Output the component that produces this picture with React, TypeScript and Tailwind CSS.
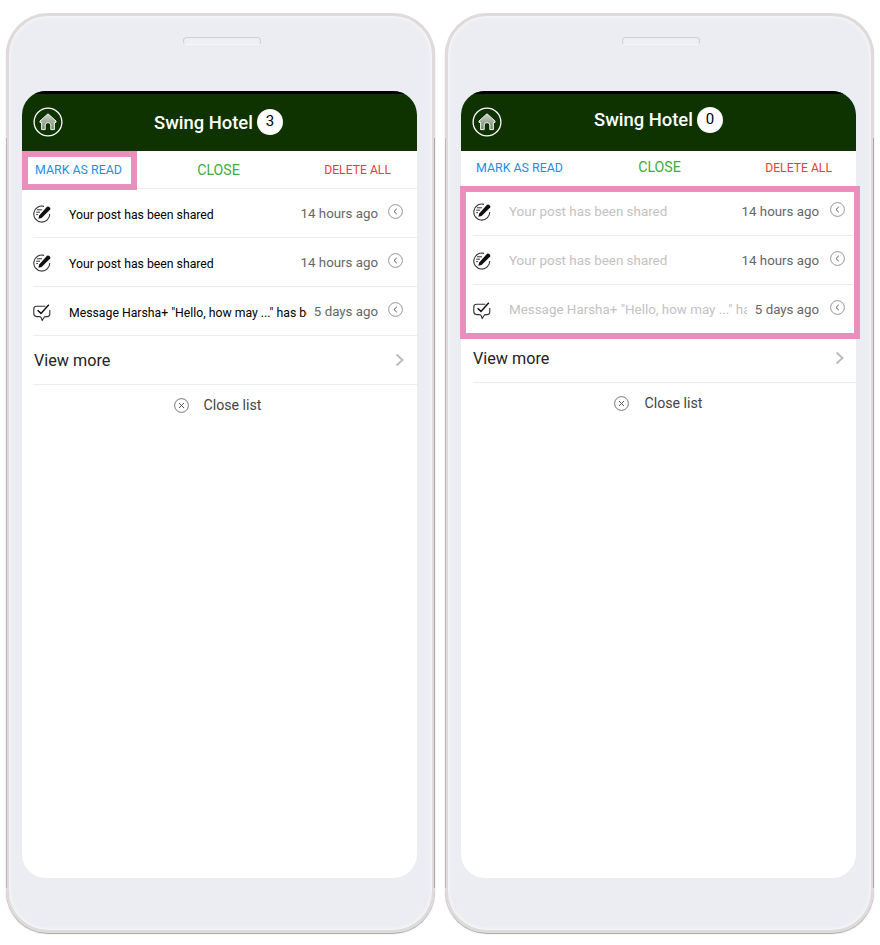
import React from 'react';

function HomeIcon() {
  return (
    <svg width="30" height="30" viewBox="0 0 30 30" fill="none">
      <defs>
        <linearGradient id="homeFill" x1="0" y1="0" x2="0" y2="1">
          <stop offset="0" stopColor="#c9d3c5" />
          <stop offset="1" stopColor="#75876f" />
        </linearGradient>
      </defs>
      <circle cx="15" cy="15" r="13.9" stroke="#fff" strokeWidth="1.3" />
      <path
        d="M15 6.8 L23 14 V15.4 H21.4 V22.6 H17.8 V18 Q17.8 15.6 15 15.6 Q12.2 15.6 12.2 18 V22.6 H8.6 V15.4 H7 V14 Z"
        fill="url(#homeFill)"
        stroke="#f4f6f2"
        strokeWidth="1"
        strokeLinejoin="round"
      />
    </svg>
  );
}

function PenIcon() {
  return (
    <svg width="18" height="18" viewBox="0 0 18 18" fill="none">
      <path d="M11 1.4 A8 8 0 1 0 16.8 9" stroke="#333" strokeWidth="1.1" />
      <path d="M6.2 10.6 L5.4 13.8 L8.6 13 L17.2 4.6 Q17.8 3.6 16.6 2.2 Q15.2 1 14 1.8 Z" fill="#111" />
      <path d="M4 4.8 H9 M3.2 7.2 H7 M3.2 9.6 H5" stroke="#333" strokeWidth="1" />
    </svg>
  );
}

function CheckBubbleIcon() {
  return (
    <svg width="18" height="18" viewBox="0 0 18 18" fill="none">
      <path
        d="M12.4 2.2 H3.6 Q0.8 2.2 0.8 5 V9.6 Q0.8 12.6 3.6 12.6 H6.4 Q7.8 12.6 8.4 14 L9.2 16.6 L11 13.4 Q11.4 12.6 12.6 12.6 H14.2 Q16.8 12.6 16.8 9.8 V6"
        stroke="#333"
        strokeWidth="1.1"
        strokeLinejoin="round"
      />
      <path d="M4.6 6.2 L8 9.4 L15.8 0.8" stroke="#111" strokeWidth="1.5" />
    </svg>
  );
}

function BackCircle() {
  return (
    <svg width="15" height="15" viewBox="0 0 15 15" fill="none">
      <circle cx="7.5" cy="7.5" r="6.9" stroke="#8a8a8a" strokeWidth="0.9" />
      <path d="M8.8 4.8 L6 7.5 L8.8 10.2" stroke="#555" strokeWidth="1" />
    </svg>
  );
}

function CloseCircle() {
  return (
    <svg width="15" height="15" viewBox="0 0 15 15" fill="none">
      <circle cx="7.5" cy="7.5" r="6.9" stroke="#666" strokeWidth="0.9" />
      <path d="M5 5 L10 10 M10 5 L5 10" stroke="#555" strokeWidth="1" />
    </svg>
  );
}

const items = [
  { id: 1, icon: 'pen', text: 'Your post has been shared', time: '14 hours ago' },
  { id: 2, icon: 'pen', text: 'Your post has been shared', time: '14 hours ago' },
  { id: 3, icon: 'check', text: 'Message Harsha+ "Hello, how may ..." has been sent', time: '5 days ago' },
];

function Phone({ count, read }: { count: number; read: boolean }) {
  return (
    <div className="relative h-[920px] w-[429px] shrink-0 rounded-[42px] border-[3px] border-[#e0dada] bg-[#ecedf2] pl-[13px] pt-[75px] shadow-[0_1px_1px_#a9a5a5,inset_0_0_4px_#fff]">
      {/* speaker */}
      <div className="absolute left-[174px] top-[21px] h-[8px] w-[78px] rounded-full border border-[#cfcfd3] border-b-[#f7f7f9] bg-[#eeeff3]" />
      {/* side edges */}
      <div className="absolute -right-[3px] top-[122px] h-[750px] w-px bg-[#a9a7a7]" />
      <div className="absolute -left-[3px] top-[122px] h-[750px] w-px bg-[#b9b7b7]" />

      <div className="h-[787px] w-[395px] overflow-hidden rounded-[24px] bg-white font-['Roboto',sans-serif]">
        <div className="relative flex h-[60px] items-center justify-center border-t-[3px] border-black bg-[#0f3300]">
          <div className="absolute left-[11px] top-[13px]">
            <HomeIcon />
          </div>
          <div className={read ? 'flex items-center gap-[4px] pb-[5px]' : 'flex items-center gap-[4px] pr-[2px]'}>
            <span className="text-[18.4px] font-medium text-white">Swing Hotel</span>
            <span className="flex h-[26px] w-[26px] items-center justify-center rounded-full bg-white pb-[2px] text-[15px] text-black">
              {count}
            </span>
          </div>
        </div>

        <div className={read ? 'flex h-[36px] items-center justify-between pb-[2px] pl-[15px] pr-[24px]' : 'flex h-[38px] items-center justify-between border-b border-[#ececec] pl-[13px] pr-[26px] pt-[2px]'}>
          <span className="text-[12.4px] text-[#1e8ee8]">MARK AS READ</span>
          <span className="mr-[9px] text-[14.2px] text-[#3dab3d]">CLOSE</span>
          <span className="text-[12.2px] text-[#f03a3a]">DELETE ALL</span>
        </div>

        <div className={read ? 'pl-[12px]' : 'pl-[11px]'}>
          {items.map((item) => (
            <div
              key={item.id}
              className={
                read
                  ? 'flex h-[49px] items-center border-b border-[#ececec] pr-[11px]'
                  : 'flex h-[49px] items-center border-b border-[#ececec] pr-[14px]'
              }
            >
              <div className={item.icon === 'pen' ? 'w-[36px] shrink-0 pt-[1px]' : 'w-[36px] shrink-0 pt-[3px]'}>
                {item.icon === 'pen' ? <PenIcon /> : <CheckBubbleIcon />}
              </div>
              <div
                className={
                  read
                    ? 'min-w-0 flex-1 overflow-hidden whitespace-nowrap pt-[2px] text-[13.4px] text-[#c2c2c2]'
                    : 'min-w-0 flex-1 overflow-hidden whitespace-nowrap pt-[4px] text-[12.25px] text-black'
                }
              >
                {item.text}
              </div>
              <div className={read ? 'ml-[8px] shrink-0 whitespace-nowrap pt-[1px] text-[13.3px] text-[#666]' : 'ml-[7px] shrink-0 whitespace-nowrap pt-[2px] text-[13.3px] text-[#666]'}>
                {item.time}
              </div>
              <div className={read ? 'ml-[11px] shrink-0 pb-[3px]' : 'ml-[10px] shrink-0 pb-[3px]'}>
                <BackCircle />
              </div>
            </div>
          ))}
        </div>

        <div className={read ? 'ml-[12px] flex h-[49px] items-center justify-between border-b border-[#ececec] pr-[10px]' : 'ml-[11px] flex h-[49px] items-center justify-between border-b border-[#ececec] pr-[11px]'}>
          <span className={read ? 'pt-[3px] text-[16.2px] text-[#222]' : 'pl-[1px] pt-[3px] text-[16.2px] text-[#222]'}>View more</span>
          <svg width="12" height="14" viewBox="0 0 12 14" fill="none">
            <path d="M2.5 1.5 L8.5 7 L2.5 12.5" stroke="#bdbdbd" strokeWidth="2" />
          </svg>
        </div>

        <div className={read ? 'flex h-[41px] items-center justify-center' : 'flex h-[41px] items-center justify-center pr-[3px]'}>
          <CloseCircle />
          <span className={read ? 'ml-[15px] text-[14.2px] text-[#444]' : 'ml-[14px] text-[14.2px] text-[#444]'}>Close list</span>
        </div>
      </div>

      {/* highlight frames over the content */}
      {read ? (
        <div className="absolute left-[12px] top-[170px] h-[153px] w-[400px] border-[6px] border-[#ea8fbd]" />
      ) : (
        <div className="absolute left-[13px] top-[135px] h-[39px] w-[115px] border-[6px] border-[#ea8fbd]" />
      )}
    </div>
  );
}

export default function App() {
  return (
    <div className="flex h-[945px] w-[880px] gap-[10px] overflow-hidden bg-white pl-[6px] pt-[13px]">
      <Phone count={3} read={false} />
      <Phone count={0} read={true} />
    </div>
  );
}
